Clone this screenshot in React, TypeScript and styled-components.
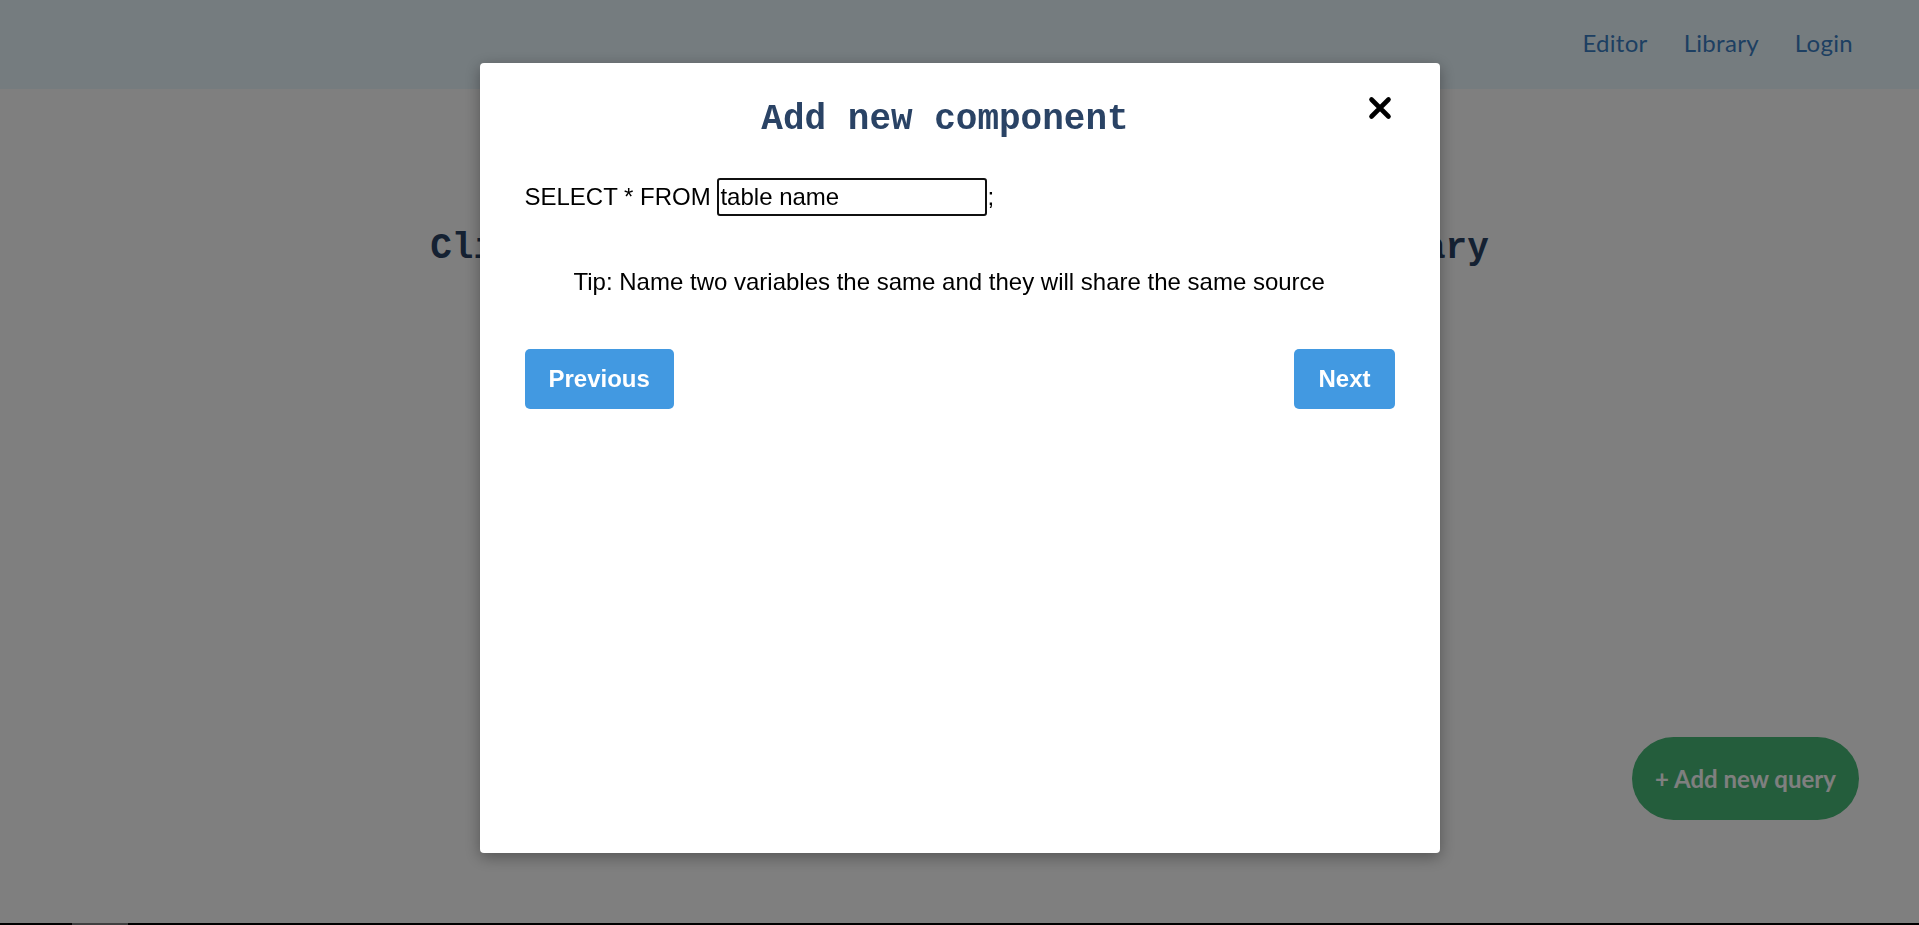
import React from "react";
import styled, { createGlobalStyle } from "styled-components";

const GlobalStyle = createGlobalStyle`
  html, body {
    margin: 0;
    padding: 0;
    background: #ffffff;
  }
  body {
    font-family: "Liberation Sans", Arial, sans-serif;
  }
  * {
    box-sizing: border-box;
  }
`;

const Page = styled.div`
  min-height: 100vh;
  display: flex;
  flex-direction: column;
  background: #ffffff;
`;

const Header = styled.header`
  height: 89px;
  background: #ebf8ff;
  display: flex;
  justify-content: flex-end;
  align-items: center;
  padding: 0 66px 4px 0;
`;

const Nav = styled.nav`
  display: flex;
  gap: 36px;
`;

const NavLink = styled.a`
  font-family: Lato, "Liberation Sans", sans-serif;
  font-size: 24px;
  letter-spacing: 0.3px;
  color: #3b7fc4;
  text-decoration: none;
`;

const Main = styled.main`
  flex: 1;
  padding-top: 139px;
  text-align: center;
`;

const Heading = styled.h1`
  margin: 0;
  font-family: "Liberation Mono", "Courier New", monospace;
  font-weight: 700;
  font-size: 36px;
  color: #2a4365;
`;

const Footer = styled.footer`
  height: 2px;
  background: #000000;
  display: flex;
`;

const FooterThumb = styled.div`
  margin-left: 72px;
  width: 56px;
  background: #808080;
`;

const AddQueryButton = styled.button`
  position: fixed;
  right: 60px;
  bottom: 105px;
  width: 227px;
  height: 83px;
  border: none;
  border-radius: 42px;
  background: #48bb78;
  color: #ffffff;
  font-family: Lato, "Liberation Sans", sans-serif;
  font-weight: 700;
  font-size: 24px;
  cursor: pointer;
`;

const Overlay = styled.div`
  position: fixed;
  inset: 0;
  background: rgba(0, 0, 0, 0.5);
  display: flex;
  justify-content: center;
  align-items: flex-start;
  padding-top: 63px;
`;

const Modal = styled.div`
  width: 960px;
  height: 790px;
  background: #ffffff;
  border-radius: 4px;
  box-shadow: 0 4px 16px rgba(0, 0, 0, 0.35);
  padding: 36px 45px 0 45px;
  display: flex;
  flex-direction: column;
`;

const TitleRow = styled.div`
  display: flex;
  align-items: flex-start;
`;

const Title = styled.h2`
  flex: 1;
  margin: 0;
  text-align: center;
  font-family: "Liberation Mono", "Courier New", monospace;
  font-weight: 700;
  font-size: 36px;
  color: #2a4365;
`;

const CloseButton = styled.button`
  width: 29px;
  height: 24px;
  margin-top: -3px;
  padding: 0;
  border: none;
  background: transparent;
  display: flex;
  justify-content: center;
  align-items: center;
  cursor: pointer;
`;

const QueryRow = styled.div`
  margin-top: 38px;
  font-family: "Liberation Sans", Arial, sans-serif;
  font-size: 24px;
  color: #000000;
`;

const TableInput = styled.input`
  width: 270px;
  height: 38px;
  border: 2px solid #101010;
  border-radius: 3px;
  padding: 0 1px;
  font-family: "Liberation Sans", Arial, sans-serif;
  font-size: 24px;
  color: #000000;
  background: #ffffff;
  outline: none;
  vertical-align: baseline;
`;

const Tip = styled.p`
  margin: 52px 0 0 0;
  padding-left: 49px;
  font-family: "Liberation Sans", Arial, sans-serif;
  font-size: 24px;
  color: #000000;
`;

const ButtonRow = styled.div`
  margin-top: 53px;
  display: flex;
  justify-content: space-between;
`;

const StepButton = styled.button`
  height: 60px;
  padding: 0 24px;
  border: none;
  border-radius: 5px;
  background: #4299e1;
  color: #ffffff;
  font-family: "Liberation Sans", Arial, sans-serif;
  font-weight: 700;
  font-size: 24px;
  cursor: pointer;
`;

const CloseIcon = () => (
  <svg width="24" height="24" viewBox="0 0 24 24" aria-hidden="true">
    <path
      d="M3.5 3.5 L20.5 20.5 M20.5 3.5 L3.5 20.5"
      stroke="#000000"
      strokeWidth="4.6"
      strokeLinecap="round"
      fill="none"
    />
  </svg>
);

export default function App() {
  return (
    <>
      <GlobalStyle />
      <Page>
        <Header>
          <Nav>
            <NavLink href="#">Editor</NavLink>
            <NavLink href="#">Library</NavLink>
            <NavLink href="#">Login</NavLink>
          </Nav>
        </Header>
        <Main>
          <Heading>Click on 'Add new query' to add it to the library</Heading>
        </Main>
        <Footer>
          <FooterThumb />
        </Footer>
      </Page>
      <AddQueryButton>+ Add new query</AddQueryButton>
      <Overlay>
        <Modal>
          <TitleRow>
            <Title>Add new component</Title>
            <CloseButton aria-label="Close">
              <CloseIcon />
            </CloseButton>
          </TitleRow>
          <QueryRow>
            SELECT * FROM <TableInput defaultValue="table name" />;
          </QueryRow>
          <Tip>Tip: Name two variables the same and they will share the same source</Tip>
          <ButtonRow>
            <StepButton>Previous</StepButton>
            <StepButton>Next</StepButton>
          </ButtonRow>
        </Modal>
      </Overlay>
    </>
  );
}
